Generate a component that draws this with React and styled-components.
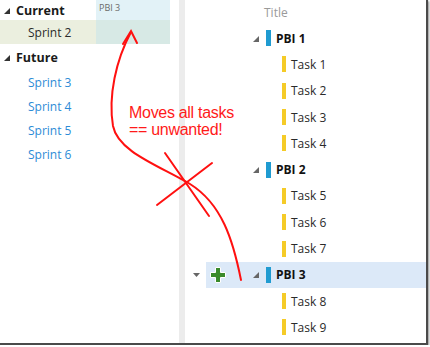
import styled, { createGlobalStyle } from "styled-components";

const Global = createGlobalStyle`
    *, *::before, *::after {
        box-sizing: border-box;
    }

    body {
        margin: 0;
        background: #ffffff;
        font-family: "Open Sans", "Noto Sans", sans-serif;
    }
`

const sprints = [
    { name: "Sprint 3" },
    { name: "Sprint 4" },
    { name: "Sprint 5" },
    { name: "Sprint 6" },
]

const items = [
    { kind: "pbi", title: "PBI 1" },
    { kind: "task", title: "Task 1" },
    { kind: "task", title: "Task 2" },
    { kind: "task", title: "Task 3" },
    { kind: "task", title: "Task 4" },
    { kind: "pbi", title: "PBI 2" },
    { kind: "task", title: "Task 5" },
    { kind: "task", title: "Task 6" },
    { kind: "task", title: "Task 7" },
    { kind: "pbi", title: "PBI 3", selected: true },
    { kind: "task", title: "Task 8" },
    { kind: "task", title: "Task 9" },
]

function Corner({ color = "#333" }) {
    return (
        <svg width="6" height="6" viewBox="0 0 6 6">
            <polygon points="6,0 6,6 0,6" fill={color} />
        </svg>
    )
}

function Plus() {
    return (
        <svg width="18" height="18" viewBox="0 0 18 18">
            <path
                d="M6.5 1.5h5v5h5v5h-5v5h-5v-5h-5v-5h5z"
                fill="#3a8a2a"
                stroke="#ffffff"
                strokeWidth="1"
                strokeLinejoin="round"
            />
        </svg>
    )
}

export default function App() {
    return (
        <>
            <Global />
            <Frame>
                <LeftPanel>
                    <GroupHead>
                        <Corner />
                        <span>Current</span>
                    </GroupHead>
                    <SprintRow $current>Sprint 2</SprintRow>
                    <GroupHead $tall>
                        <Corner />
                        <span>Future</span>
                    </GroupHead>
                    {sprints.map((s) => (
                        <SprintRow key={s.name}>{s.name}</SprintRow>
                    ))}
                    <DragGhost>PBI 3</DragGhost>
                </LeftPanel>
                <Splitter />
                <Grid>
                    <HeaderRow>Title</HeaderRow>
                    {items.map((item) => (
                        <Row key={item.title}>
                            <Gutter>
                                {item.selected && (
                                    <svg width="7" height="4" viewBox="0 0 7 4">
                                        <polygon points="0,0 7,0 3.5,4" fill="#666" />
                                    </svg>
                                )}
                            </Gutter>
                            <RowBody $selected={item.selected}>
                                <Actions>{item.selected && <Plus />}</Actions>
                                {item.kind === "pbi" ? (
                                    <Expander>
                                        <Corner color="#666" />
                                    </Expander>
                                ) : (
                                    <Indent />
                                )}
                                <Bar $kind={item.kind} />
                                <Label $bold={item.kind === "pbi"}>{item.title}</Label>
                            </RowBody>
                        </Row>
                    ))}
                </Grid>
                <Annotation>
                    <svg width="430" height="347" viewBox="0 0 430 347">
                        <g fill="none" stroke="#ff1010" strokeWidth="2" strokeLinecap="round">
                            <path d="M241 280 C233 240, 222 204, 190 184 C160 166, 118 152, 113 126 C108 96, 116 60, 131 32" />
                            <path d="M123 44 L131 31 L137 43" />
                            <path d="M165 153 L209 216" />
                            <path d="M212 163 L157 205" />
                        </g>
                    </svg>
                    <Note>
                        Moves all tasks
                        <br />
                        == unwanted!
                    </Note>
                </Annotation>
            </Frame>
        </>
    )
}

const Frame = styled.div`
    position: relative;
    display: flex;
    width: 428px;
    height: 345px;
    background: #ffffff;
    border-right: 2px solid #4a4a4a;
    border-bottom: 2px solid #4a4a4a;
    box-shadow: 1px 1px 2px rgba(0, 0, 0, 0.45);
    overflow: hidden;
`

const LeftPanel = styled.div`
    position: relative;
    width: 179px;
    padding-right: 9px;
    display: flex;
    flex-direction: column;
`

const GroupHead = styled.div`
    height: ${(p) => (p.$tall ? "26px" : "20px")};
    display: flex;
    align-items: center;
    gap: 6px;
    padding-left: 4px;
    font-size: 12.5px;
    font-weight: 700;
    color: #1a1a1a;

    svg {
        margin-top: 2px;
    }
`

const SprintRow = styled.div`
    height: 24px;
    display: flex;
    align-items: center;
    padding-left: 28px;
    font-size: 12px;
    color: ${(p) => (p.$current ? "#2a2a2a" : "#2d8bd6")};
    background: ${(p) => (p.$current ? "#ebefdf" : "transparent")};
`

const DragGhost = styled.div`
    position: absolute;
    left: 96px;
    top: 0;
    width: 74px;
    height: 44px;
    padding: 1px 0 0 3px;
    font-size: 9px;
    color: #6a6a6a;
    background: rgba(190, 226, 238, 0.45);
`

const Splitter = styled.div`
    width: 6px;
    background: #ececec;
`

const Grid = styled.div`
    flex: 1;
    display: flex;
    flex-direction: column;
`

const HeaderRow = styled.div`
    height: 25px;
    display: flex;
    align-items: center;
    padding-left: 79px;
    font-size: 12px;
    color: #9a9a9a;
`

const Row = styled.div`
    height: 26.3px;
    display: flex;
`

const Gutter = styled.div`
    width: 21px;
    display: flex;
    align-items: center;
    justify-content: center;
    padding-left: 2px;
`

const RowBody = styled.div`
    flex: 1;
    display: flex;
    align-items: center;
    background: ${(p) => (p.$selected ? "#dce9f8" : "transparent")};
`

const Actions = styled.div`
    width: 42px;
    display: flex;
    align-items: center;
    padding-left: 3px;
`

const Expander = styled.div`
    width: 18px;
    display: flex;
    align-items: center;
    padding-left: 5px;
    margin-top: 1px;
`

const Indent = styled.div`
    width: 34px;
`

const Bar = styled.div`
    width: ${(p) => (p.$kind === "pbi" ? "5px" : "4px")};
    height: 16px;
    background: ${(p) => (p.$kind === "pbi" ? "#1f9bd1" : "#f5cb27")};
    margin-right: 5px;
`

const Label = styled.span`
    font-size: 12px;
    font-weight: ${(p) => (p.$bold ? 700 : 400)};
    color: ${(p) => (p.$bold ? "#111" : "#2a2a2a")};
`

const Annotation = styled.div`
    position: absolute;
    inset: 0;
    pointer-events: none;

    svg {
        position: absolute;
        left: 0;
        top: 0;
    }
`

const Note = styled.div`
    position: absolute;
    left: 129px;
    top: 104px;
    font-family: "Liberation Sans", Arial, sans-serif;
    font-size: 16px;
    line-height: 17px;
    letter-spacing: -0.3px;
    color: #ff1a1a;
`
